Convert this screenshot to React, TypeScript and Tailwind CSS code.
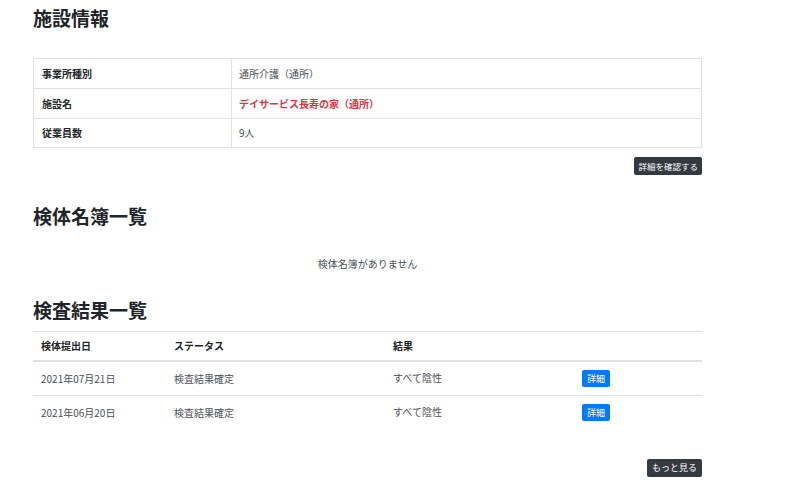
const font = { fontFamily: '"Noto Sans CJK JP", "Noto Sans", sans-serif' };

const facilityRows = [
  { label: "事業所種別", value: "通所介護（通所）", accent: false },
  { label: "施設名", value: "デイサービス長寿の家（通所）", accent: true },
  { label: "従業員数", value: "9人", accent: false },
];

const results = [
  { date: "2021年07月21日", status: "検査結果確定", result: "すべて陰性" },
  { date: "2021年06月20日", status: "検査結果確定", result: "すべて陰性" },
];

function Heading({ children }: { children: React.ReactNode }) {
  return <h2 className="h-[36px] flex items-center text-[19px] font-bold text-[#212529]">{children}</h2>;
}

export default function App() {
  return (
    <div className="min-h-[495px] bg-white" style={font}>
      <div className="ml-[33px] w-[669px] flex flex-col">
        {/* 施設情報 */}
        <Heading>施設情報</Heading>
        <div className="mt-[22px] border border-[#dee2e6]">
          {facilityRows.map((row, i) => (
            <div
              key={row.label}
              className={`grid grid-cols-[198px_1fr] h-[29.3px] text-[10px] ${i > 0 ? "border-t border-[#dee2e6]" : ""}`}
            >
              <div className="flex items-center px-[8px] font-bold text-[#212529] border-r border-[#dee2e6]">{row.label}</div>
              <div
                className={`flex items-center px-[7px] ${row.accent ? "font-bold text-[#dc3545]" : "text-[#495057]"}`}
              >
                {row.value}
              </div>
            </div>
          ))}
        </div>
        <div className="mt-[9px] flex justify-end">
          <button className="h-[18px] px-[4px] rounded-[2px] bg-[#343a40] text-white text-[8.5px] leading-none">
            詳細を確認する
          </button>
        </div>

        {/* 検体名簿一覧 */}
        <div className="mt-[23px]">
          <Heading>検体名簿一覧</Heading>
        </div>
        <p className="mt-[22px] h-[15px] flex items-center justify-center text-[10px] text-[#495057]">
          検体名簿がありません
        </p>

        {/* 検査結果一覧 */}
        <div className="mt-[21px]">
          <Heading>検査結果一覧</Heading>
        </div>
        <div className="mt-[3px] border-t border-[#dee2e6]">
          <div className="grid grid-cols-[133px_219px_189px_1fr] h-[30px] border-b-2 border-[#dee2e6] text-[10px] font-bold text-[#212529]">
            <div className="flex items-center px-[8px]">検体提出日</div>
            <div className="flex items-center px-[8px]">ステータス</div>
            <div className="flex items-center px-[8px]">結果</div>
            <div />
          </div>
          {results.map((r, i) => (
            <div
              key={r.date}
              className={`grid grid-cols-[133px_219px_189px_1fr] h-[34px] text-[10px] text-[#495057] ${i < results.length - 1 ? "border-b border-[#dee2e6]" : ""}`}
            >
              <div className="flex items-center px-[8px]">{r.date}</div>
              <div className="flex items-center px-[8px]">{r.status}</div>
              <div className="flex items-start pt-[8px] px-[8px]">{r.result}</div>
              <div className="flex items-center px-[8px]">
                <button className="h-[17px] px-[5px] rounded-[2px] bg-[#007bff] text-white text-[9px] leading-none">
                  詳細
                </button>
              </div>
            </div>
          ))}
        </div>
        <div className="mt-[29px] flex justify-end">
          <button className="h-[18px] px-[5px] rounded-[2px] bg-[#343a40] text-white text-[9px] leading-none">
            もっと見る
          </button>
        </div>
      </div>
    </div>
  );
}
